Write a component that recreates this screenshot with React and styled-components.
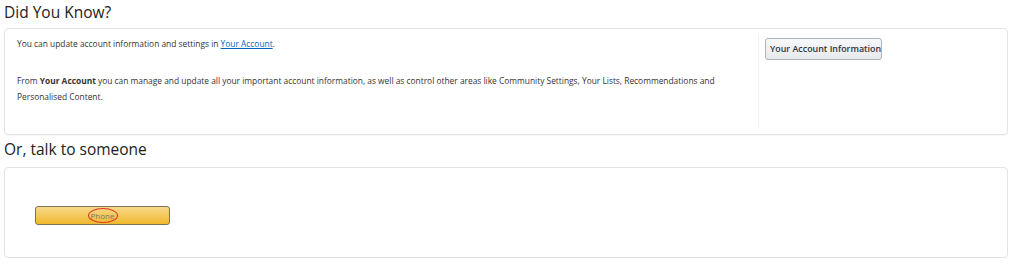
import React from 'react';
import styled, { createGlobalStyle } from 'styled-components';

const GlobalStyle = createGlobalStyle`
  body {
    margin: 0;
    background: #ffffff;
    font-family: "Open Sans", "Noto Sans", Arial, sans-serif;
    color: #111;
  }
`;

const Page = styled.div`
  width: 1004px;
  padding-left: 4px;
`;

const Heading = styled.h2`
  margin: 0;
  height: ${(p) => p.$height}px;
  font-size: 15.5px;
  font-weight: 400;
  line-height: ${(p) => p.$height - 4}px;
  color: #222;
`;

const Box = styled.div`
  box-sizing: border-box;
  height: ${(p) => p.$height}px;
  border: 1px solid #e3e3e3;
  border-radius: 4px;
  box-shadow: 0 1px 1px rgba(0, 0, 0, 0.04);
  display: flex;
`;

const MainColumn = styled.div`
  flex: 1;
  padding: 7px 24px 7px 12px;
  font-size: 8.4px;
  color: #333;
`;

const Paragraph = styled.p`
  margin: 0 0 ${(p) => p.$after || 0}px;
  line-height: 16px;
`;

const Link = styled.a`
  color: #0066c0;
  text-decoration: underline;
`;

const SideColumn = styled.div`
  box-sizing: border-box;
  width: 249px;
  margin: 4px 0 6px;
  border-left: 1px solid #f0f0f0;
  padding: 2px 6px;
`;

const GreyButton = styled.button`
  box-sizing: border-box;
  height: 22px;
  width: 117px;
  padding: 0 4px;
  background: linear-gradient(#f7f8fa, #e7e9ec);
  border: 1px solid #adb1b8;
  border-radius: 3px;
  font-family: inherit;
  font-size: 8.9px;
  font-weight: 600;
  color: #333;
  text-align: left;
  white-space: nowrap;
  overflow: hidden;
`;

const CallArea = styled.div`
  padding: 34px 30px;
`;

const PhoneButton = styled.button`
  position: relative;
  box-sizing: border-box;
  width: 135px;
  height: 19px;
  padding: 0;
  background: linear-gradient(#f8d98a, #f0b92c);
  border: 1px solid #7d7355;
  border-radius: 3px;
  font-family: inherit;
  font-size: 8px;
  color: #777;
`;

const Circle = styled.span`
  position: absolute;
  left: 52px;
  top: 1px;
  width: 28px;
  height: 13px;
  border: 1.5px solid #e0342a;
  border-radius: 50%;
`;

export default function App() {
  return (
    <Page>
      <GlobalStyle />
      <Heading $height={28}>Did You Know?</Heading>
      <Box $height={107}>
        <MainColumn>
          <Paragraph $after={21}>
            You can update account information and settings in <Link href="#">Your Account</Link>.
          </Paragraph>
          <Paragraph>
            From <b>Your Account</b> you can manage and update all your important account information, as well as
            control other areas like Community Settings, Your Lists, Recommendations and Personalised Content.
          </Paragraph>
        </MainColumn>
        <SideColumn>
          <GreyButton>Your Account Information</GreyButton>
        </SideColumn>
      </Box>
      <Heading $height={32}>Or, talk to someone</Heading>
      <Box $height={91}>
        <CallArea>
          <PhoneButton>
            Phone
            <Circle />
          </PhoneButton>
        </CallArea>
      </Box>
    </Page>
  );
}
